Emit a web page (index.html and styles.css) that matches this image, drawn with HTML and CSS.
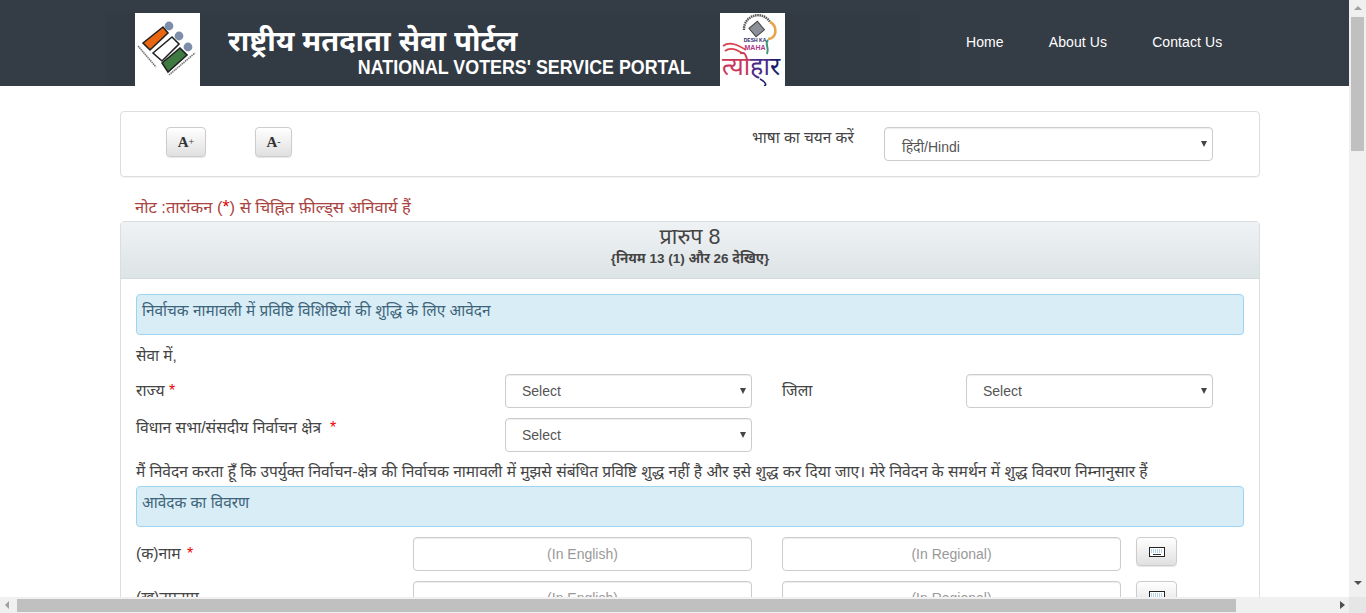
FILE: index.html
```html
<!DOCTYPE html>
<html lang="hi">
<head>
<meta charset="utf-8">
<title>राष्ट्रीय मतदाता सेवा पोर्टल</title>
<link rel="stylesheet" href="styles.css">
</head>
<body>
<div class="viewport">
  <div class="page">
    <header class="site-header">
      <div class="brand">
        <div class="logo">
          <svg viewBox="0 0 65 73" width="65" height="73">
            <rect width="65" height="73" fill="#fff"/>
            <circle cx="34" cy="13" r="4.4" fill="#7d8eaa"/>
            <circle cx="44" cy="23" r="4.4" fill="#7d8eaa"/>
            <circle cx="53" cy="34" r="4.4" fill="#7d8eaa"/>
            <polygon points="8,30 28,14 33,20 15,37" fill="#e8660f" stroke="#222" stroke-width="1.6"/>
            <polygon points="18,40 37,24 44,31 27,48" fill="#fff" stroke="#222" stroke-width="1.6"/>
            <polygon points="27,50 45,35 52,42 33,59" fill="#3f7a40" stroke="#222" stroke-width="1.6"/>
            <line x1="3" y1="33" x2="21" y2="54" stroke="#777" stroke-width="1.6" stroke-dasharray="1.5 .6"/>
            <line x1="34" y1="62" x2="60" y2="40" stroke="#777" stroke-width="1.6" stroke-dasharray="1.5 .6"/>
          </svg>
        </div>
        <div class="titles">
          <div class="title-hi">राष्ट्रीय मतदाता सेवा पोर्टल</div>
          <div class="title-en">NATIONAL VOTERS' SERVICE PORTAL</div>
        </div>
        <div class="logo logo-festival">
          <svg viewBox="0 0 65 73" width="65" height="73">
            <rect width="65" height="73" fill="#fff"/>
            <path d="M24 17 A14 14 0 0 1 50 9" fill="none" stroke="#555" stroke-width="2.4" stroke-dasharray="1.5 .7"/>
            <path d="M50 9 C58 13 57 26 48 26" fill="none" stroke="#e5a54a" stroke-width="2.6"/>
            <path d="M48 27 C44 31 50 34 47 41" fill="none" stroke="#3c9a72" stroke-width="2"/>
            <rect x="31" y="11" width="11" height="11" transform="rotate(-40 36 16)" fill="#8a8f98" stroke="#444"/>
            <text class="fest-en" x="35" y="29">DESH KA</text>
            <text class="fest-maha" x="35" y="37">MAHA</text>
            <text class="fest-hi" x="31" y="62"><tspan class="fest-a">त्यो</tspan><tspan class="fest-b">हा</tspan><tspan class="fest-c">र</tspan></text>
            <path d="M3 33 C10 28 18 32 26 37 M5 38 C10 34 16 36 22 40" fill="none" stroke="#d8404a" stroke-width="1.8"/>
            <path d="M40 66 C44 68 48 72 44 73" fill="none" stroke="#1d1d6b" stroke-width="1.6"/>
          </svg>
        </div>
      </div>
      <nav class="nav">
        <a class="nav-link">Home</a>
        <a class="nav-link">About Us</a>
        <a class="nav-link">Contact Us</a>
      </nav>
    </header>

    <main class="content">
      <section class="toolbar">
        <button class="btn btn-font btn-plus" type="button"><b>A</b><small>+</small></button>
        <button class="btn btn-font btn-minus" type="button"><b>A</b><small>-</small></button>
        <label class="lang-label">भाषा का चयन करें</label>
        <div class="select lang-select">हिंदी/Hindi</div>
      </section>

      <p class="note">नोट :तारांकन (<span class="req-inline">*</span>) से चिह्नित फ़ील्ड्स अनिवार्य हैं</p>

      <section class="panel">
        <div class="panel-head">
          <h1 class="form-title">प्रारुप 8</h1>
          <h2 class="form-sub">{नियम 13 (1) और 26 देखिए}</h2>
        </div>
        <div class="panel-body">
          <div class="alert">निर्वाचक नामावली में प्रविष्टि विशिष्टियों की शुद्धि के लिए आवेदन</div>
          <div class="to-line">सेवा में,</div>
          <div class="row row-select">
            <label class="lbl">राज्य <span class="req">*</span></label>
            <div class="select">Select</div>
            <label class="lbl lbl-mid">जिला</label>
            <div class="select">Select</div>
          </div>
          <div class="row row-select row-second">
            <label class="lbl lbl-top">विधान सभा/संसदीय निर्वाचन क्षेत्र &nbsp;<span class="req">*</span></label>
            <div class="select">Select</div>
          </div>
          <p class="statement">मैं निवेदन करता हूँ कि उपर्युक्त निर्वाचन-क्षेत्र की निर्वाचक नामावली में मुझसे संबंधित प्रविष्टि शुद्ध नहीं है और इसे शुद्ध कर दिया जाए। मेरे निवेदन के समर्थन में शुद्ध विवरण निम्नानुसार हैं</p>
          <div class="alert">आवेदक का विवरण</div>
          <div class="row row-input">
            <label class="lbl">(क)नाम <span class="req">*</span></label>
            <div class="input">(In English)</div>
            <div class="input input-regional">(In Regional)</div>
            <button class="btn btn-kbd" type="button">
              <svg viewBox="0 0 16 10" width="16" height="10"><rect x=".5" y=".5" width="15" height="9" fill="#fff" stroke="#222"/><path d="M2 3h12M2 5h12" stroke="#6aa8d8" stroke-dasharray="1 1"/><path d="M4 7.5h8" stroke="#333"/></svg>
            </button>
          </div>
          <div class="row row-input">
            <label class="lbl">(ख)उपनाम</label>
            <div class="input">(In English)</div>
            <div class="input input-regional">(In Regional)</div>
            <button class="btn btn-kbd" type="button">
              <svg viewBox="0 0 16 10" width="16" height="10"><rect x=".5" y=".5" width="15" height="9" fill="#fff" stroke="#222"/><path d="M2 3h12M2 5h12" stroke="#6aa8d8" stroke-dasharray="1 1"/><path d="M4 7.5h8" stroke="#333"/></svg>
            </button>
          </div>
        </div>
      </section>
    </main>
  </div>

  <div class="scroll-v">
    <span class="arrow arrow-up"></span>
    <span class="thumb-v"></span>
    <span class="arrow arrow-down"></span>
  </div>
  <div class="scroll-h">
    <span class="arrow arrow-left"></span>
    <span class="thumb-h"></span>
    <span class="arrow arrow-right"></span>
  </div>
  <div class="scroll-corner"></div>
</div>
</body>
</html>
```
FILE: styles.css
```css
* { box-sizing: border-box; }
html, body { margin: 0; height: 100%; overflow: hidden; }
body {
  font-family: "Liberation Sans", "Noto Sans", "DejaVu Sans", sans-serif;
  font-size: 15.4px;
  line-height: 20px;
  color: #444;
  background: #fff;
}
.viewport {
  display: grid;
  grid-template-columns: 1349px 17px;
  grid-template-rows: 597px 16px;
  width: 1366px;
  height: 613px;
}
.page { overflow: hidden; }

.site-header {
  display: flex;
  height: 86px;
  background: #343c46;
  padding-top: 13px;
}
.brand {
  display: flex;
  width: 815px;
  height: 73px;
  margin-left: 105px;
  padding-left: 30px;
  background: #323a44;
}
.logo { width: 65px; height: 73px; flex: none; }
.logo svg { display: block; }
.titles { width: 463px; margin-left: 28px; color: #fff; font-weight: bold; }
.title-hi { font-size: 29px; line-height: 34px; margin-top: 11px; white-space: nowrap; }
.title-en {
  font-size: 21px;
  line-height: 24px;
  margin-top: -3px;
  text-align: right;
  white-space: nowrap;
  transform: scaleX(.85);
  transform-origin: right center;
}
.logo-festival { margin-left: 29px; }
.fest-en { font: bold 5px "Liberation Sans", sans-serif; fill: #2c2a6a; text-anchor: middle; }
.fest-maha { font: bold 7px "Liberation Sans", sans-serif; fill: #b03a8a; text-anchor: middle; }
.fest-hi { font: 25px "Liberation Sans", "Noto Sans", sans-serif; text-anchor: middle; }
.fest-a { fill: #c8365a; }
.fest-b { fill: #4b2a8a; }
.fest-c { fill: #1d1d6b; }

.nav { display: flex; gap: 45px; margin-left: 46px; padding-top: 19px; }
.nav-link { color: #fff; font-size: 14px; line-height: 20px; letter-spacing: .1px; }

.content { width: 1140px; margin-left: 120px; padding-top: 25px; }

.toolbar {
  display: flex;
  height: 66px;
  border: 1px solid #ddd;
  border-radius: 4px;
  padding: 15px 0 0 45px;
  box-shadow: 0 1px 1px rgba(0,0,0,.05);
}
.btn {
  border: 1px solid #ccc;
  border-radius: 4px;
  background: linear-gradient(#fff, #e0e0e0);
  box-shadow: 0 1px 1px rgba(0,0,0,.1);
  padding: 0;
  color: #333;
}
.btn-font {
  height: 30px;
  font-family: "Liberation Serif", serif;
  font-size: 15px;
  line-height: 26px;
}
.btn-font small { font-size: 10px; vertical-align: 2px; }
.btn-plus { width: 40px; }
.btn-minus { width: 37px; margin-left: 49px; }
.lang-label { width: 132px; margin-left: 460px; margin-top: 1px; white-space: nowrap; }
.select {
  position: relative;
  height: 34px;
  border: 1px solid #ccc;
  border-radius: 4px;
  background: #fff;
  box-shadow: inset 0 1px 1px rgba(0,0,0,.075);
  padding: 6px 16px;
  color: #555;
  font-size: 14px;
}
.select::after {
  content: "";
  position: absolute;
  right: 5px;
  top: 13px;
  border-left: 3.5px solid transparent;
  border-right: 3.5px solid transparent;
  border-top: 6px solid #444;
}
.lang-select { width: 329px; padding: 9px 17px 0; }

.note { margin: 20px 0 4px 15px; color: #a94442; height: 20px; font-size: 16.5px; white-space: nowrap; }
.req-inline { color: #d00; font-size: 18px; }

.panel { border: 1px solid #ddd; border-radius: 4px 4px 0 0; }
.panel-head {
  height: 57px;
  background: linear-gradient(#eff2f4, #dde4e6);
  text-align: center;
  padding-top: 3px;
  border-bottom: 1px solid #d5dadc;
}
.form-title { margin: 0; font-size: 21.5px; line-height: 24px; font-weight: normal; }
.form-sub { margin: 0; font-size: 13.5px; line-height: 20px; font-weight: bold; }
.panel-body { padding: 15px 15px 0 15px; }

.alert {
  height: 41px;
  border: 1px solid #9dd5ee;
  border-radius: 4px;
  background: #d9edf7;
  padding: 6px 5px 0;
  color: #3d6478;
}
.to-line { margin-top: 11px; height: 19px; }
.row { display: grid; }
.row-select {
  margin-top: 9px;
  grid-template-columns: 369px 247px 214px 247px;
}
.row-select .lbl { padding-top: 7px; font-size: 15.7px; }
.row-select .lbl-mid { padding-left: 30px; }
.row-second { margin-top: 10px; }
.row-select .lbl-top { padding-top: 0; white-space: nowrap; }
.req { color: #e00; font-size: 16px; }
.statement { margin: 10px 0 4px; height: 20px; white-space: nowrap; font-size: 15.55px; }

.row-input {
  margin-top: 10px;
  grid-template-columns: 277px 339px 369px 56px;
}
.row-input .lbl { padding-top: 7px; font-size: 15.7px; }
.row-input .lbl .req { margin-left: 2px; }
.input {
  height: 34px;
  border: 1px solid #ccc;
  border-radius: 4px;
  box-shadow: inset 0 1px 1px rgba(0,0,0,.075);
  text-align: center;
  padding: 6px 12px;
  color: #999;
  font-size: 14px;
}
.input-regional { margin-left: 30px; }
.btn-kbd { width: 41px; height: 29px; margin-left: 15px; display: flex; align-items: center; justify-content: center; }

.scroll-v, .scroll-h, .scroll-corner { background: #f0f0f0; }
.scroll-v { display: flex; flex-direction: column; align-items: center; }
.thumb-v { width: 13px; height: 134px; background: #c0c0c0; }
.scroll-h { display: flex; align-items: center; grid-column: 1; grid-row: 2; }
.thumb-h { width: 1219px; height: 13px; background: #c0c0c0; margin-left: 8px; }
.scroll-corner { background: #e6e6e6; }
.arrow { display: block; flex: none; width: 0; height: 0; }
.arrow-up { border-left: 4px solid transparent; border-right: 4px solid transparent; border-bottom: 4px solid #a0a0a0; margin: 6px 0 7px; }
.arrow-down { border-left: 4px solid transparent; border-right: 4px solid transparent; border-top: 4px solid #505050; margin-top: 430px; }
.arrow-left { border-top: 4px solid transparent; border-bottom: 4px solid transparent; border-right: 4px solid #a0a0a0; margin-left: 5px; }
.arrow-right { border-top: 4px solid transparent; border-bottom: 4px solid transparent; border-left: 5px solid #505050; margin-left: auto; margin-right: 4px; }
```
